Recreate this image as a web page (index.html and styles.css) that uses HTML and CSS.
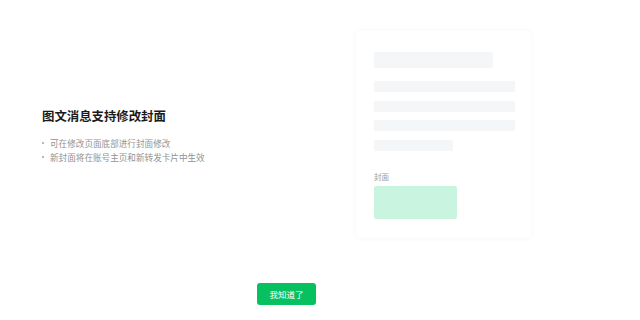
FILE: index.html
```html
<!DOCTYPE html>
<html lang="zh-CN">
<head>
    <meta charset="UTF-8">
    <title>图文消息支持修改封面</title>
    <link rel="stylesheet" href="styles.css">
</head>
<body>
    <div class="dialog">
        <div class="content">
            <div class="intro">
                <h2 class="intro-title">图文消息支持修改封面</h2>
                <ul class="intro-list">
                    <li>可在修改页面底部进行封面修改</li>
                    <li>新封面将在账号主页和新转发卡片中生效</li>
                </ul>
            </div>

            <div class="preview">
                <div class="skeleton skeleton-title"></div>
                <div class="skeleton-lines">
                    <div class="skeleton skeleton-line"></div>
                    <div class="skeleton skeleton-line"></div>
                    <div class="skeleton skeleton-line"></div>
                    <div class="skeleton skeleton-line short"></div>
                </div>
                <div class="cover-label">封面</div>
                <div class="cover-box"></div>
            </div>
        </div>

        <div class="footer">
            <button class="btn-primary">我知道了</button>
        </div>
    </div>
</body>
</html>
```

FILE: styles.css
```css
body {
    margin: 0;
    background: #fff;
    font-family: "Noto Sans CJK SC", "Noto Sans", sans-serif;
}

.dialog {
    width: 571px;
    box-sizing: border-box;
    padding: 31px 40px 0 42px;
}

.content {
    display: flex;
    justify-content: space-between;
    align-items: center;
}

.intro {
    margin-top: 4px;
}

.intro-title {
    margin: 0 0 11px;
    font-size: 12.4px;
    line-height: 17px;
    font-weight: 700;
    color: #1a1a1a;
}

.intro-list {
    margin: 0;
    padding: 0;
    list-style: none;
    color: #929292;
    font-size: 8.6px;
    line-height: 14px;
}

.intro-list li {
    position: relative;
    padding-left: 8px;
}

.intro-list li::before {
    content: "";
    position: absolute;
    left: 0;
    top: 6px;
    width: 2px;
    height: 2px;
    border-radius: 50%;
    background: #a0a0a0;
}

.preview {
    width: 175px;
    box-sizing: border-box;
    padding: 21px 16px 19px 18px;
    border-radius: 4px;
    background: #fff;
    box-shadow: 0 0 6px rgba(0, 0, 0, 0.045);
}

.skeleton {
    background: #f5f6f8;
}

.skeleton-title {
    width: 119px;
    height: 16px;
}

.skeleton-lines {
    display: flex;
    flex-direction: column;
    gap: 8.5px;
    margin-top: 13px;
}

.skeleton-line {
    height: 11px;
}

.skeleton-line.short {
    width: 79px;
}

.cover-label {
    margin-top: 21px;
    font-size: 7.5px;
    line-height: 10px;
    color: #9a9a9a;
}

.cover-box {
    width: 83px;
    height: 33px;
    margin-top: 4px;
    border-radius: 2px;
    background: #c9f5e0;
}

.footer {
    display: flex;
    justify-content: center;
    margin-top: 45px;
}

.btn-primary {
    width: 59px;
    height: 22px;
    padding: 0;
    border: none;
    border-radius: 3px;
    background: #07c160;
    color: #fff;
    font-family: inherit;
    font-size: 8.5px;
    cursor: pointer;
}
```
